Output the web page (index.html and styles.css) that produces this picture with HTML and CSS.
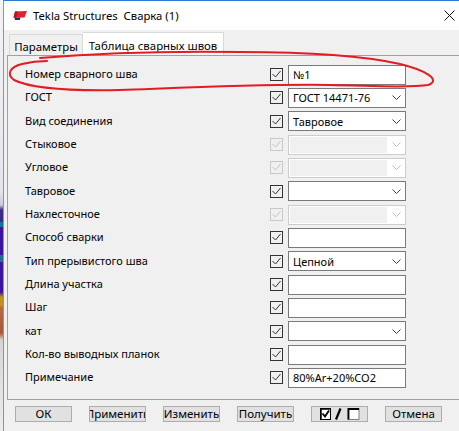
FILE: index.html
```html
<!DOCTYPE html>
<html lang="ru">
<head>
<meta charset="utf-8">
<title>Tekla Structures Сварка (1)</title>
<link rel="stylesheet" href="styles.css">
</head>
<body>
<div class="screen">
  <div class="desktop"></div>
  <div class="window">
    <div class="titlebar">
      <svg class="app-icon" viewBox="0 0 15 10" width="15" height="10">
        <polygon points="2,0.5 14,0 11.5,6.5 0.5,6.8" fill="#e3202b"/>
        <polygon points="2,0.5 5,0.4 3.2,6.7 0.5,6.8" fill="#b8141e"/>
        <polygon points="1.5,6.8 7.5,6.6 6.8,9 2,9" fill="#243263"/>
      </svg>
      <span class="title">Tekla Structures  Сварка (1)</span>
      <div class="close">
        <svg viewBox="0 0 11 11" width="11" height="11"><path d="M0.5 0.5 L10.5 10.5 M10.5 0.5 L0.5 10.5" stroke="#111" stroke-width="1" fill="none"/></svg>
      </div>
    </div>
    <div class="tabstrip">
      <div class="tab">Параметры</div>
      <div class="tab active">Таблица сварных швов</div>
    </div>
    <div class="panel">
      <div class="grid">
        <span class="label">Номер сварного шва</span>
        <span class="cb"><svg viewBox="0 0 11 11"><path d="M1.5 5 L4.5 8 L9.5 2"/></svg></span>
        <span class="field">№1</span>

        <span class="label">ГОСТ</span>
        <span class="cb"><svg viewBox="0 0 11 11"><path d="M1.5 5 L4.5 8 L9.5 2"/></svg></span>
        <span class="field combo"><span class="val">ГОСТ 14471-76</span><svg class="chev" viewBox="0 0 9 5"><path d="M0.5 0.5 L4.5 4.5 L8.5 0.5"/></svg></span>

        <span class="label">Вид соединения</span>
        <span class="cb"><svg viewBox="0 0 11 11"><path d="M1.5 5 L4.5 8 L9.5 2"/></svg></span>
        <span class="field combo"><span class="val">Тавровое</span><svg class="chev" viewBox="0 0 9 5"><path d="M0.5 0.5 L4.5 4.5 L8.5 0.5"/></svg></span>

        <span class="label">Стыковое</span>
        <span class="cb off"><svg viewBox="0 0 11 11"><path d="M1.5 5 L4.5 8 L9.5 2"/></svg></span>
        <span class="field combo off"><span class="fill"></span><svg class="chev" viewBox="0 0 9 5"><path d="M0.5 0.5 L4.5 4.5 L8.5 0.5"/></svg></span>

        <span class="label">Угловое</span>
        <span class="cb off"><svg viewBox="0 0 11 11"><path d="M1.5 5 L4.5 8 L9.5 2"/></svg></span>
        <span class="field combo off"><span class="fill"></span><svg class="chev" viewBox="0 0 9 5"><path d="M0.5 0.5 L4.5 4.5 L8.5 0.5"/></svg></span>

        <span class="label">Тавровое</span>
        <span class="cb"><svg viewBox="0 0 11 11"><path d="M1.5 5 L4.5 8 L9.5 2"/></svg></span>
        <span class="field combo"><span class="val"></span><svg class="chev" viewBox="0 0 9 5"><path d="M0.5 0.5 L4.5 4.5 L8.5 0.5"/></svg></span>

        <span class="label">Нахлесточное</span>
        <span class="cb off"><svg viewBox="0 0 11 11"><path d="M1.5 5 L4.5 8 L9.5 2"/></svg></span>
        <span class="field combo off"><span class="fill"></span><svg class="chev" viewBox="0 0 9 5"><path d="M0.5 0.5 L4.5 4.5 L8.5 0.5"/></svg></span>

        <span class="label">Способ сварки</span>
        <span class="cb"><svg viewBox="0 0 11 11"><path d="M1.5 5 L4.5 8 L9.5 2"/></svg></span>
        <span class="field"></span>

        <span class="label">Тип прерывистого шва</span>
        <span class="cb"><svg viewBox="0 0 11 11"><path d="M1.5 5 L4.5 8 L9.5 2"/></svg></span>
        <span class="field combo"><span class="val">Цепной</span><svg class="chev" viewBox="0 0 9 5"><path d="M0.5 0.5 L4.5 4.5 L8.5 0.5"/></svg></span>

        <span class="label">Длина участка</span>
        <span class="cb"><svg viewBox="0 0 11 11"><path d="M1.5 5 L4.5 8 L9.5 2"/></svg></span>
        <span class="field"></span>

        <span class="label">Шаг</span>
        <span class="cb"><svg viewBox="0 0 11 11"><path d="M1.5 5 L4.5 8 L9.5 2"/></svg></span>
        <span class="field"></span>

        <span class="label">кат</span>
        <span class="cb"><svg viewBox="0 0 11 11"><path d="M1.5 5 L4.5 8 L9.5 2"/></svg></span>
        <span class="field combo"><span class="val"></span><svg class="chev" viewBox="0 0 9 5"><path d="M0.5 0.5 L4.5 4.5 L8.5 0.5"/></svg></span>

        <span class="label">Кол-во выводных планок</span>
        <span class="cb"><svg viewBox="0 0 11 11"><path d="M1.5 5 L4.5 8 L9.5 2"/></svg></span>
        <span class="field"></span>

        <span class="label">Примечание</span>
        <span class="cb"><svg viewBox="0 0 11 11"><path d="M1.5 5 L4.5 8 L9.5 2"/></svg></span>
        <span class="field">80%Ar+20%CO2</span>
      </div>
    </div>
    <div class="buttons">
      <div class="btn">ОК</div>
      <div class="btn"><span>Применить</span></div>
      <div class="btn">Изменить</div>
      <div class="btn">Получить</div>
      <div class="btn">
        <svg class="toggle" viewBox="0 0 40 13" width="40" height="13">
          <rect x="0.5" y="1.5" width="10" height="11" fill="#fff" stroke="#000"/>
          <path d="M1 2 H10.5 M1 2 V12.5" stroke="#000" stroke-width="1.5" fill="none"/>
          <path d="M2.5 6.5 L5 9.5 L9 3.5" stroke="#000" stroke-width="1.8" fill="none"/>
          <path d="M20.5 1.5 L16 12.5" stroke="#000" stroke-width="2.2" fill="none"/>
          <rect x="28" y="1.5" width="11" height="11" fill="#fff" stroke="#808080" stroke-width="1"/>
          <path d="M28.5 12.5 V2 H39" stroke="#000" stroke-width="1.8" fill="none"/>
        </svg>
      </div>
      <div class="btn">Отмена</div>
    </div>
  </div>
</div>
<svg class="annotation" viewBox="0 0 459 431" width="459" height="431">
  <path d="M40 58 C100 53, 180 51, 240 52 C300 52, 360 55, 400 64 C425 70, 442 80, 428 85 C410 88, 380 86, 330 85 C260 84, 200 87, 120 90 C70 91, 30 88, 14 80 C6 74, 10 67, 22 64 C30 62, 40 61, 47 61" />
</svg>
</body>
</html>
```

FILE: styles.css
```css
* {
  box-sizing: border-box;
}

html, body {
  margin: 0;
  padding: 0;
}

body {
  width: 459px;
  height: 431px;
  overflow: hidden;
  position: relative;
  background: #f0f0f0;
  color: #000;
  font-family: "Noto Sans", "Open Sans", sans-serif;
  font-size: 11px;
}

.screen {
  display: flex;
  height: 431px;
}

.desktop {
  flex: none;
  width: 3px;
  background: linear-gradient(to bottom,
    #f4f4f6 0, #e6e4ea 190px, #cfc8dc 205px,
    #3b2a8a 210px, #3b2a8a 222px,
    #1d6f9a 222px, #1d6f9a 227px,
    #3a14a0 227px, #3a14a0 255px,
    #1d6f9a 255px, #1d6f9a 262px,
    #3a14a0 262px, #3a14a0 292px,
    #c09020 297px, #c09020 306px,
    #b86a40 307px, #a8583a 333px,
    #d8d4d4 340px, #ececec 431px);
}

.window {
  flex: none;
  width: 469px;
  border-left: 1px solid #8497b0;
  border-top: 1px solid #2f7ad1;
  background: #f0f0f0;
  display: flex;
  flex-direction: column;
}

.titlebar {
  height: 29px;
  background: #fff;
  display: flex;
  align-items: center;
  padding-left: 9px;
}

.app-icon {
  flex: none;
  margin-top: 1px;
}

.title {
  flex: 1;
  margin-left: 5px;
  font-size: 11.3px;
  white-space: pre;
  color: #000;
}

.close {
  flex: none;
  width: 46px;
  height: 29px;
  display: flex;
  align-items: center;
  justify-content: center;
}

.tabstrip {
  height: 25px;
  display: flex;
  align-items: flex-end;
  padding-left: 5px;
}

.tab {
  height: 21px;
  width: 74px;
  border: 1px solid #d9d9d9;
  border-bottom: none;
  background: #f0f0f0;
  display: flex;
  align-items: center;
  justify-content: center;
  padding-top: 2px;
  white-space: nowrap;
  font-size: 11.4px;
}

.tab.active {
  height: 23px;
  width: 141px;
  border-left: none;
  background: #fff;
  padding-top: 2px;
}

.panel {
  margin-left: 3px;
  border: 1px solid #a0a0a0;
  border-right: none;
  padding: 7px 0 9px 17px;
}

.grid {
  display: grid;
  grid-template-columns: 240px 13px 118px;
  grid-auto-rows: 23.33px;
  column-gap: 5px;
  align-items: center;
}

.label {
  white-space: nowrap;
  margin-top: -2px;
}

.cb {
  width: 13px;
  height: 13px;
  border: 1px solid #333;
  background: #f0f0f0;
  display: flex;
  align-items: center;
  justify-content: center;
}

.cb svg {
  width: 11px;
  height: 11px;
  fill: none;
  stroke: #333;
  stroke-width: 1;
}

.cb.off {
  border-color: #c8c8c8;
}

.cb.off svg {
  stroke: #c4c4c4;
}

.field {
  height: 20px;
  border: 1px solid #7a7a7a;
  background: #fff;
  display: flex;
  align-items: center;
  padding-left: 4px;
  white-space: nowrap;
}

.field .val {
  flex: 1;
}

.chev {
  flex: none;
  width: 9px;
  height: 5px;
  margin-right: 4px;
  fill: none;
  stroke: #444;
  stroke-width: 1;
}

.field.off {
  border-color: #cccccc;
  padding: 1px 0 1px 1px;
  align-items: stretch;
}

.field.off .fill {
  width: 97px;
  background: #f0f0f0;
}

.field.off .chev {
  stroke: #c0c0c0;
  align-self: center;
  margin-left: auto;
}

.buttons {
  display: flex;
  gap: 17px;
  padding-left: 11px;
  margin-top: 6px;
}

.btn {
  flex: none;
  width: 57px;
  height: 16px;
  border: 1px solid #adadad;
  background: #e1e1e1;
  display: flex;
  align-items: center;
  justify-content: center;
  overflow: hidden;
  white-space: nowrap;
  font-size: 11.5px;
}

.btn span {
  flex: none;
}

.toggle {
  flex: none;
}

.annotation {
  position: absolute;
  left: 0;
  top: 0;
  pointer-events: none;
  fill: none;
  stroke: #e41b23;
  stroke-width: 2;
  stroke-linecap: round;
}
```
